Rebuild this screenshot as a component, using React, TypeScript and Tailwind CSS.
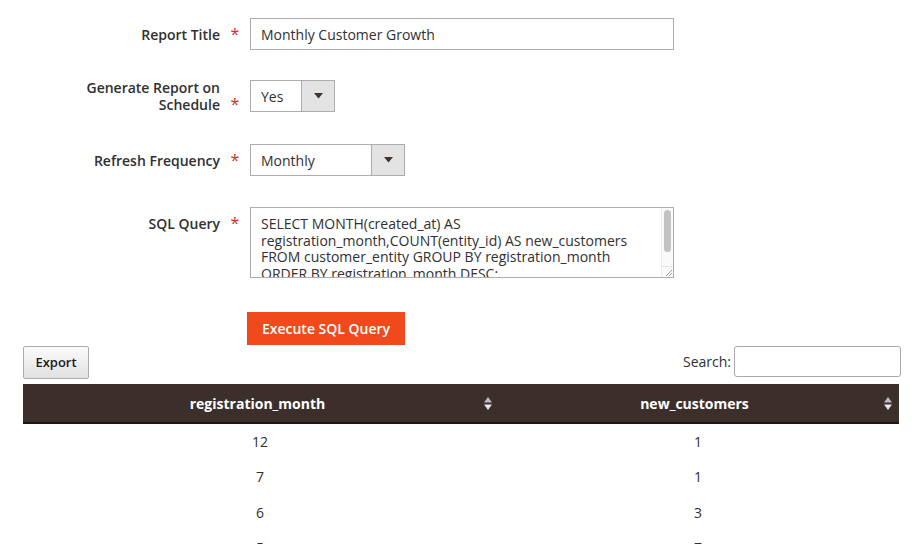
import { ReactNode } from 'react';

const FONT = { fontFamily: '"Open Sans", "Liberation Sans", sans-serif' };

const SQL_TEXT =
  'SELECT MONTH(created_at) AS registration_month,COUNT(entity_id) AS new_customers FROM customer_entity GROUP BY registration_month ORDER BY registration_month DESC;';

const ROWS = [
  { month: '12', customers: '1' },
  { month: '7', customers: '1' },
  { month: '6', customers: '3' },
  { month: '5', customers: '7' },
];

function FieldRow({ label, children, alignTop }: { label: ReactNode; children: ReactNode; alignTop?: boolean }) {
  return (
    <div className={`flex ${alignTop ? 'items-start' : 'items-center'}`}>
      <div className={`w-[197px] text-right text-[14px] font-semibold leading-[17px] text-[#303030] ${alignTop ? 'pt-[8px]' : ''}`}>
        {label}
      </div>
      <div className={`w-[30px] self-stretch flex justify-center ${alignTop ? 'pt-[8px]' : 'items-center'}`}>
        <span className="text-[16px] leading-[17px] text-[#e22626]">*</span>
      </div>
      {children}
    </div>
  );
}

function SelectBox({ value, width }: { value: string; width: string }) {
  return (
    <div className={`flex h-[32px] ${width} border border-[#adadad] bg-white`}>
      <div className="flex-1 flex items-center pl-[10px] text-[14px] text-[#303030]">{value}</div>
      <div className="w-[33px] flex items-center justify-center border-l border-[#adadad] bg-[#e3e3e3]">
        <svg width="9" height="6" viewBox="0 0 9 6">
          <path d="M0 0 L9 0 L4.5 5.5 Z" fill="#41362f" />
        </svg>
      </div>
    </div>
  );
}

function SortIcon() {
  return (
    <svg width="8" height="13" viewBox="0 0 8 13" className="shrink-0">
      <path d="M4 0 L8 5.5 L0 5.5 Z" fill="#bdbdbd" />
      <path d="M0 7.5 L8 7.5 L4 13 Z" fill="#e6e6e6" />
    </svg>
  );
}

export default function App() {
  return (
    <div className="min-h-[544px] w-[916px] bg-white pl-[23px] pt-[18px] pr-[15px]" style={FONT}>
      {/* Report form */}
      <FieldRow label="Report Title">
        <div className="flex h-[32px] w-[424px] items-center border border-[#adadad] bg-white pl-[10px] text-[14px] text-[#303030]">
          Monthly Customer Growth
        </div>
      </FieldRow>

      <div className="mt-[29px]">
        <div className="flex items-center">
          <div className="w-[197px] text-right text-[14px] font-semibold leading-[17px] text-[#303030]">
            Generate Report on
            <br />
            Schedule
          </div>
          <div className="w-[30px] self-end flex justify-center">
            <span className="text-[16px] leading-[17px] text-[#e22626]">*</span>
          </div>
          <SelectBox value="Yes" width="w-[85px]" />
        </div>
      </div>

      <div className="mt-[31px]">
        <FieldRow label="Refresh Frequency">
          <SelectBox value="Monthly" width="w-[155px]" />
        </FieldRow>
      </div>

      <div className="mt-[31px]">
        <FieldRow label="SQL Query" alignTop>
          <div className="flex h-[71px] w-[424px] border border-[#adadad] bg-white">
            <div className="flex-1 overflow-hidden pl-[10px] pr-[8px] pt-[8px] text-[14px] leading-[16.5px] text-[#303030]">
              {SQL_TEXT}
            </div>
            <div className="flex w-[12px] flex-col border-l border-[#ececec] bg-[#fafafa]">
              <div className="flex-1 px-[2px] pt-[2px]">
                <div className="h-[42px] w-full rounded-full bg-[#c2c2c2]" />
              </div>
              <div className="flex h-[11px] items-end justify-end border-t border-[#e6e6e6]">
                <svg width="8" height="8" viewBox="0 0 8 8">
                  <path d="M1 7 L7 1 M4 7 L7 4" stroke="#9a9a9a" strokeWidth="1" />
                </svg>
              </div>
            </div>
          </div>
        </FieldRow>
      </div>

      <div className="mt-[34px] pl-[224px]">
        <button className="h-[33px] w-[158px] bg-[#f04a1c] text-[14px] font-semibold text-white">
          Execute SQL Query
        </button>
      </div>

      {/* Toolbar */}
      <div className="mt-[1px] flex items-start justify-between">
        <button className="h-[33px] w-[66px] rounded-[2px] border border-[#adadad] bg-gradient-to-b from-[#fbfbfb] to-[#e1e1e1] text-[13px] font-semibold text-[#1a1a1a]">
          Export
        </button>
        <div className="flex items-center">
          <span className="mr-[3px] text-[14px] text-[#303030]">Search:</span>
          <div className="h-[31px] w-[167px] rounded-[3px] border border-[#a9a9a9] bg-white" />
        </div>
      </div>

      {/* Results table */}
      <div className="mt-[5px] w-[876px]">
        <div className="flex h-[40px] border-b-2 border-[#1b1716] bg-[#3c2f2b] text-[14px] font-bold text-white">
          <div className="flex w-[474px] items-center pr-[5px]">
            <span className="flex-1 text-center pl-[8px]">registration_month</span>
            <SortIcon />
          </div>
          <div className="flex flex-1 items-center pr-[7px]">
            <span className="flex-1 text-center pl-[8px]">new_customers</span>
            <SortIcon />
          </div>
        </div>
        {ROWS.map((row) => (
          <div key={row.month} className="flex h-[35.3px] items-center text-[14px] text-[#303030]">
            <div className="w-[474px] text-center">{row.month}</div>
            <div className="flex-1 text-center">{row.customers}</div>
          </div>
        ))}
      </div>
    </div>
  );
}
